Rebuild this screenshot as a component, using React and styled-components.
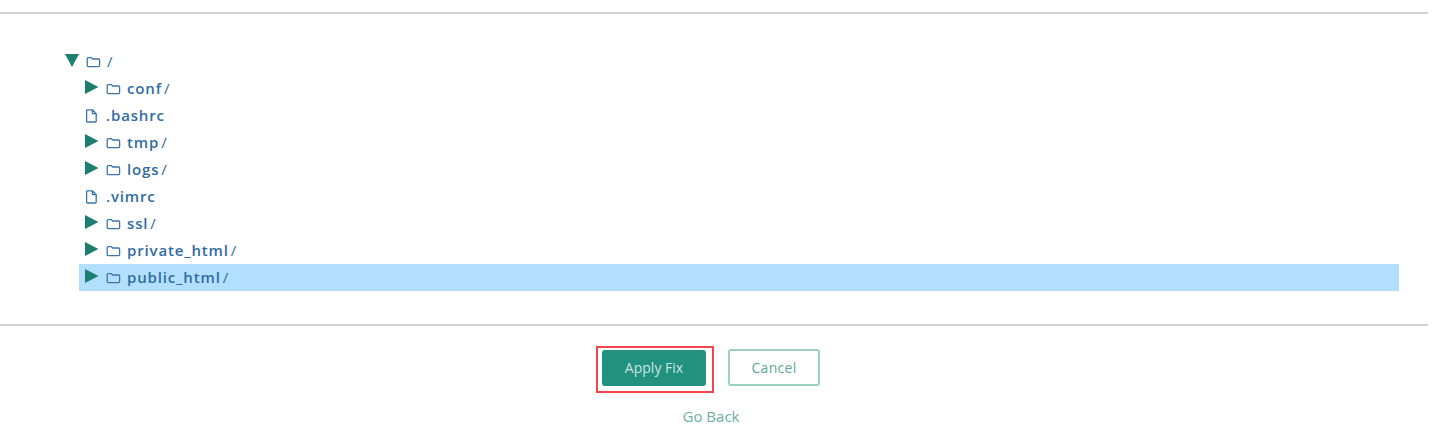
import React from 'react';
import styled, { createGlobalStyle } from 'styled-components';

const GlobalStyle = createGlobalStyle`
  html, body {
    margin: 0;
    padding: 0;
    background: #fff;
  }
  body {
    font-family: "Open Sans", "Noto Sans", sans-serif;
  }
`;

const Page = styled.div`
  width: 1428px;
  height: 448px;
  padding-top: 12px;
  box-sizing: border-box;
`;

const Rule = styled.hr`
  margin: 0;
  border: none;
  height: 2px;
  background: #d0d0d0;
`;

const Tree = styled.div`
  padding: 34px 29px 33px 65px;
`;

const Children = styled.ul`
  list-style: none;
  margin: 0 0 0 14px;
  padding: 0;
`;

const Row = styled.div`
  display: flex;
  align-items: center;
  height: 27px;
`;

const ChildRow = styled.li`
  display: flex;
  align-items: center;
  height: 27px;
  padding-left: 6px;
  background: ${(p) => (p.$selected ? '#b3dfff' : 'transparent')};
`;

const Toggle = styled.svg`
  flex: none;
  width: 14px;
  height: 14px;
  margin-right: 7px;
  margin-top: -3px;
  fill: #1c7f6e;
`;

const NodeIcon = styled.svg`
  flex: none;
  width: 15px;
  height: 14px;
  margin-right: ${(p) => p.$gap}px;
  fill: none;
  stroke: #3a74a8;
  stroke-width: 1.3;
  stroke-linejoin: round;
`;

const Name = styled.span`
  font-size: 15px;
  font-weight: 600;
  letter-spacing: 0.85px;
  line-height: 27px;
  color: #2f6ca3;
`;

const Slash = styled.span`
  margin-left: ${(p) => p.$gap}px;
  font-weight: 400;
`;

const Footer = styled.div`
  display: flex;
  flex-direction: column;
  align-items: center;
  padding-right: 6px;
`;

const Actions = styled.div`
  display: flex;
  align-items: flex-start;
  gap: 14px;
  margin-top: 20px;
  padding-right: 6px;
`;

const Highlight = styled.div`
  padding: 2px 6px 5px 4px;
  border: 2px solid #f4444e;
`;

const Button = styled.button`
  display: block;
  box-sizing: border-box;
  border-radius: 3px;
  font-family: inherit;
  font-size: 14px;
  cursor: pointer;
`;

const PrimaryButton = styled(Button)`
  width: 104px;
  height: 36px;
  padding: 0 0 2px;
  border: none;
  background: #22917f;
  color: #c9e6e0;
`;

const SecondaryButton = styled(Button)`
  width: 92px;
  height: 37px;
  margin-top: 3px;
  padding: 0;
  border: 2px solid #9ccfc6;
  background: #fff;
  color: #5fa99c;
  letter-spacing: 0.3px;
`;

const BackLink = styled.a`
  margin-top: 13px;
  font-size: 15px;
  line-height: 20px;
  color: #6bb0a4;
  text-decoration: none;
`;

const ITEMS = [
  { name: 'conf', dir: true },
  { name: '.bashrc' },
  { name: 'tmp', dir: true },
  { name: 'logs', dir: true },
  { name: '.vimrc' },
  { name: 'ssl', dir: true },
  { name: 'private_html', dir: true },
  { name: 'public_html', dir: true, selected: true },
];

function Caret({ open }) {
  return (
    <Toggle viewBox="0 0 14 14">
      <path d={open ? 'M0 1 H14 L7 14 Z' : 'M0 0 L13.5 7 L0 14 Z'} />
    </Toggle>
  );
}

function FolderIcon() {
  return (
    <NodeIcon $gap={6} viewBox="0 0 15 14">
      <path d="M1.2 3.6 Q1.2 2.6 2.2 2.6 H5.4 L6.6 4 H12.6 Q13.6 4 13.6 5 V10.6 Q13.6 11.6 12.6 11.6 H2.2 Q1.2 11.6 1.2 10.6 Z" />
    </NodeIcon>
  );
}

function FileIcon() {
  return (
    <NodeIcon $gap={6} viewBox="0 0 15 14">
      <path d="M1.6 1.6 Q1.6 0.8 2.4 0.8 H7.4 L11.2 4.6 V12.2 Q11.2 13 10.4 13 H2.4 Q1.6 13 1.6 12.2 Z M7.4 0.8 V4.6 H11.2" />
    </NodeIcon>
  );
}

function TreeItem({ item }) {
  if (!item.dir) {
    return (
      <ChildRow>
        <FileIcon />
        <Name>{item.name}</Name>
      </ChildRow>
    );
  }
  return (
    <ChildRow $selected={item.selected}>
      <Caret />
      <FolderIcon />
      <Name>
        {item.name}
        <Slash $gap={2}>/</Slash>
      </Name>
    </ChildRow>
  );
}

export default function App() {
  return (
    <Page>
      <GlobalStyle />
      <Rule />
      <Tree>
        <Row>
          <Caret open />
          <FolderIcon />
          <Name>
            <Slash $gap={0}>/</Slash>
          </Name>
        </Row>
        <Children>
          {ITEMS.map((item) => (
            <TreeItem key={item.name} item={item} />
          ))}
        </Children>
      </Tree>
      <Rule />
      <Footer>
        <Actions>
          <Highlight>
            <PrimaryButton type="button">Apply Fix</PrimaryButton>
          </Highlight>
          <SecondaryButton type="button">Cancel</SecondaryButton>
        </Actions>
        <BackLink href="#">Go Back</BackLink>
      </Footer>
    </Page>
  );
}
